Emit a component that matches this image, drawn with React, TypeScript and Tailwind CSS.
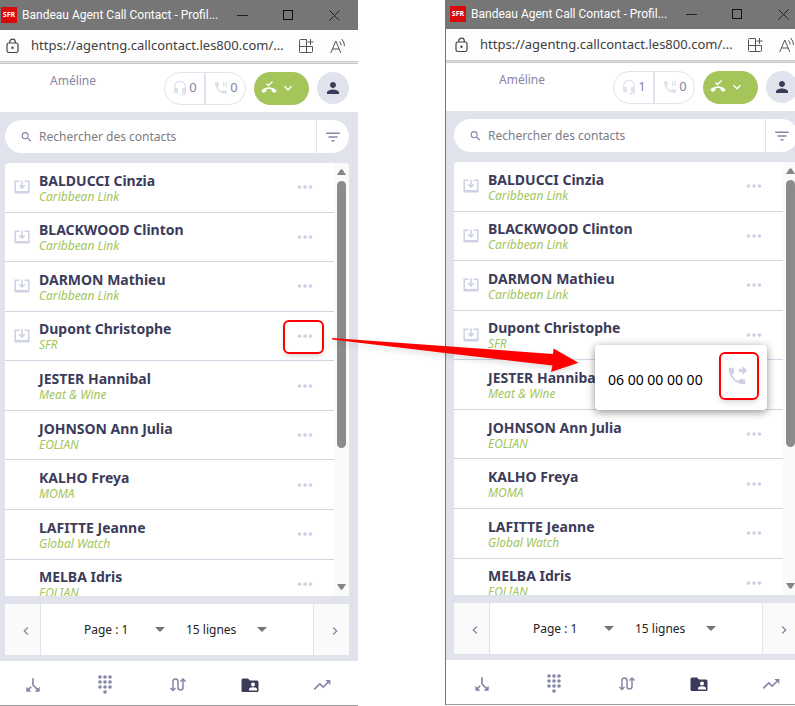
import type { ReactNode } from 'react'
import {
  MdCallSplit,
  MdFilterList,
  MdHeadsetMic,
  MdKeyboardArrowDown,
  MdKeyboardArrowLeft,
  MdKeyboardArrowRight,
  MdMoreHoriz,
  MdPerson,
  MdPhoneForwarded,
  MdPhonePaused,
  MdSearch,
  MdTrendingUp,
} from 'react-icons/md'

const contacts = [
  { name: 'BALDUCCI Cinzia', company: 'Caribbean Link', shared: true },
  { name: 'BLACKWOOD Clinton', company: 'Caribbean Link', shared: true },
  { name: 'DARMON Mathieu', company: 'Caribbean Link', shared: true },
  { name: 'Dupont Christophe', company: 'SFR', shared: true },
  { name: 'JESTER Hannibal', company: 'Meat & Wine', shared: false },
  { name: 'JOHNSON Ann Julia', company: 'EOLIAN', shared: false },
  { name: 'KALHO Freya', company: 'MOMA', shared: false },
  { name: 'LAFITTE Jeanne', company: 'Global Watch', shared: false },
  { name: 'MELBA Idris', company: 'EOLIAN', shared: false },
]

function TitleBar() {
  return (
    <div className="flex h-[30px] items-center bg-[#767676] pl-1 pr-px">
      <span className="flex size-4 shrink-0 items-center justify-center bg-[#d80a0a] text-[7px] font-bold text-white">
        SFR
      </span>
      <h1 className="ml-[5px] flex-1 whitespace-nowrap font-['Roboto',sans-serif] text-[12px] text-white">
        Bandeau Agent Call Contact - Profil...
      </h1>
      <button aria-label="Réduire" className="flex w-[46px] shrink-0 justify-center">
        <svg className="size-[11px]" viewBox="0 0 11 11" stroke="#222">
          <path d="M0 5.5h11" />
        </svg>
      </button>
      <button aria-label="Agrandir" className="flex w-[46px] shrink-0 justify-center">
        <svg className="size-[11px]" viewBox="0 0 11 11" fill="none" stroke="#111">
          <rect x=".5" y=".5" width="9" height="9" />
        </svg>
      </button>
      <button aria-label="Fermer" className="flex w-[46px] shrink-0 justify-center">
        <svg className="size-[11px]" viewBox="0 0 11 11" stroke="#222">
          <path d="M.5.5l10 10M10.5.5l-10 10" />
        </svg>
      </button>
    </div>
  )
}

function AddressBar() {
  return (
    <div className="flex h-8 items-center border-b border-[#c8c8c8] bg-[#fdfdfd] pl-[9px] pr-3">
      <svg className="h-4 w-[13px] shrink-0" viewBox="0 0 13 16" fill="none" stroke="#444" strokeWidth="1.2">
        <rect x="1" y="5" width="11" height="9.5" rx="1.8" />
        <path d="M3.7 5V4a2.8 2.8 0 0 1 5.6 0v1" />
        <circle cx="6.5" cy="9.8" r=".6" fill="#444" />
      </svg>
      <span className="ml-3 flex-1 whitespace-nowrap text-[13px] text-[#404040]">
        https://agentng.callcontact.les800.com/...
      </span>
      <button aria-label="Applications">
        <svg className="size-4" viewBox="0 0 16 16" fill="none" stroke="#555">
          <path d="M8.500 1.500h-6q-1 0-1 1v11q0 1 1 1h11q1 0 1-1v-5h-13M8.500 1.500v13M12.500 1v6M9.500 4h6" />
        </svg>
      </button>
      <button aria-label="Lecture à voix haute" className="ml-4">
        <svg className="size-4" viewBox="0 0 16 16" fill="none" stroke="#555">
          <path d="M.8 15 5.800 3l5 12M2.500 11h6.600M9.500 3.500q1.500 1.500 1.500 4M11.500 1q3 2.500 3 7" />
        </svg>
      </button>
    </div>
  )
}

function Header({ queue }: { queue: number }) {
  return (
    <header className="mt-px flex h-[49px] items-center gap-2 border-t border-[#c8c8c8] bg-white pr-[9px] text-[#8585a5]">
      <span className="flex-1 self-start pl-[53px] pt-2 text-[12px]">Améline</span>
      <div className="flex h-[33px] w-[82px] divide-x-2 divide-[#e0e2ec] rounded-full border border-[#e0e2ec] text-[13px]">
        <span className="flex flex-1 items-center justify-center gap-px">
          <MdHeadsetMic className="size-4 text-[#dfe1ec]" />
          {queue}
        </span>
        <span className="flex flex-1 items-center justify-center gap-px">
          <MdPhonePaused className="size-4 text-[#dfe1ec]" />0
        </span>
      </div>
      <button
        aria-label="Statut"
        className="flex h-[33px] w-[55px] items-center justify-center gap-[3px] rounded-full bg-[#a3c55a] pr-[6px] text-white"
      >
        <svg className="size-4" viewBox="0 0 16 16" fill="currentColor">
          <path d="M8 7.200C5 7.200 2.400 8.500.700 10.300c-.3.300-.3.600 0 .9l1.500 1.500c.3.300.6.300.9 0 .6-.500 1.200-.900 1.900-1.200.3-.1.400-.3.400-.6V9.400c1.700-.5 3.500-.5 5.200 0v1.500c0 .3.200.5.400.6.700.3 1.300.700 1.900 1.200.3.300.6.300.9 0l1.500-1.500c.3-.3.300-.6 0-.9C13.600 8.500 11 7.200 8 7.200z" />
          <path d="M5.500 3.500l2 2 4-4" fill="none" stroke="currentColor" strokeWidth="1.300" />
        </svg>
        <MdKeyboardArrowDown className="size-4" />
      </button>
      <button
        aria-label="Profil"
        className="flex size-8 items-center justify-center rounded-full bg-[#e0e2ec] text-[#3c3c5a]"
      >
        <MdPerson className="size-[18px]" />
      </button>
    </header>
  )
}

function SearchBar() {
  return (
    <form className="flex h-[33px] overflow-hidden rounded-full bg-white text-[#8585a5]">
      <label className="flex flex-1 items-center pl-[15px]">
        <MdSearch className="size-[14px]" />
        <input
          type="text"
          aria-label="Rechercher des contacts"
          placeholder="Rechercher des contacts"
          className="ml-[6px] w-full text-[12px] outline-none placeholder:text-[#7c7c84]"
        />
      </label>
      <button
        type="button"
        aria-label="Filtrer"
        className="flex w-[33px] items-center justify-center border-l border-[#e0e2ec]"
      >
        <MdFilterList className="size-[18px]" />
      </button>
    </form>
  )
}

function TrayIcon() {
  return (
    <svg className="h-[14px] w-4" viewBox="0 0 16 14" fill="none" stroke="currentColor">
      <path d="M5.500 1.200H1.200v11h13.600v-11h-4.300" strokeWidth="1.600" />
      <path d="M1 12.200h14" strokeWidth="2.600" />
      <path d="M8 .5v7M5.200 5.200 8 8l2.800-2.800" strokeWidth="1.600" />
    </svg>
  )
}

function ContactList() {
  return (
    <div className="mt-[10px] flex h-[433px] overflow-hidden rounded-t bg-white">
      <ul className="flex h-[446px] flex-1 flex-col">
        {contacts.map((contact) => (
          <li key={contact.name} className="flex flex-1 items-center border-b border-[#d3d5e3]">
            <span className="flex w-[34px] justify-center text-[#cfd2e4]">
              {contact.shared && <TrayIcon />}
            </span>
            <div className="flex-1 pt-px">
              <p className="text-[14px] font-bold leading-[18px] text-[#3c3c5a]">{contact.name}</p>
              <p className="text-[12px] italic leading-[14px] text-[#a3c55a]">{contact.company}</p>
            </div>
            <button aria-label="Actions" className="mr-[18px] text-[#cfd2e4]">
              <MdMoreHoriz className="size-[22px]" />
            </button>
          </li>
        ))}
      </ul>
      <div className="flex w-[15px] flex-col items-center bg-[#fafafa] pb-[6px] pt-[6px]">
        <svg className="h-[6px] w-[9px] shrink-0" viewBox="0 0 9 6" fill="#858585">
          <path d="M0 6h9L5.500.500h-2z" />
        </svg>
        <span className="mt-[6px] h-[267px] w-[9px] rounded-full bg-[#8b8b8b]" />
        <svg className="mt-auto h-[6px] w-[9px] shrink-0" viewBox="0 0 9 6" fill="#858585">
          <path d="M0 0h9L5.500 5.500h-2z" />
        </svg>
      </div>
    </div>
  )
}

function Dropdown({ label, value }: { label: string; value: string }) {
  return (
    <label className="relative flex w-[81px] items-center">
      <select aria-label={label} className="w-full appearance-none text-[12px] text-[#222] outline-none">
        <option>{value}</option>
      </select>
      <svg className="pointer-events-none absolute right-0 h-[5px] w-[10px]" viewBox="0 0 10 5" fill="#757575">
        <path d="M0 0h10L5 5z" />
      </svg>
    </label>
  )
}

function Pagination() {
  return (
    <div className="mt-2 flex h-[51px] bg-white text-[#8585a5]">
      <button
        aria-label="Page précédente"
        className="flex w-9 items-center justify-center border-r border-[#e0e2ec] bg-[#fafafa] pl-[6px] pt-[3px]"
      >
        <MdKeyboardArrowLeft className="size-4" />
      </button>
      <div className="flex flex-1 items-center justify-center gap-[21px] pr-[3px]">
        <Dropdown label="Page" value="Page : 1" />
        <Dropdown label="Lignes par page" value="15 lignes" />
      </div>
      <button
        aria-label="Page suivante"
        className="flex w-9 items-center justify-center border-l border-[#e0e2ec] bg-[#fafafa] pl-[6px] pt-[3px]"
      >
        <MdKeyboardArrowRight className="size-4" />
      </button>
    </div>
  )
}

function NavItem({ label, children }: { label: string; children: ReactNode }) {
  return (
    <a href="#" aria-label={label} className="flex flex-1 justify-center">
      {children}
    </a>
  )
}

function BottomNav() {
  return (
    <nav className="flex h-[45px] items-center border-b border-[#9a9a9a] bg-white pt-1 text-[#8585a5]">
      <NavItem label="Transferts">
        <MdCallSplit className="size-5 rotate-180" />
      </NavItem>
      <NavItem label="Clavier">
        <svg className="size-5" viewBox="0 0 20 20" fill="currentColor">
          {[2, 7, 12].map((y) =>
            [5, 10, 15].map((x) => <circle key={`${x}-${y}`} cx={x} cy={y} r="1.8" />),
          )}
          <circle cx="10" cy="17" r="1.8" />
        </svg>
      </NavItem>
      <NavItem label="Appels">
        <svg className="size-5" viewBox="0 0 20 20" fill="none" stroke="currentColor" strokeWidth="1.500">
          <path d="M5 15V6.500Q5 4 7.500 4T10 6.500v6q0 2.500 2.500 2.500T15 12.500V4.500" />
          <path d="M2.500 13 5 15.500 7.500 13M12.500 6.500 15 4l2.500 2.500" />
        </svg>
      </NavItem>
      <NavItem label="Contacts">
        <svg className="size-5" viewBox="0 0 20 20" fill="#3c3c5a">
          <path d="M3 3.500h5l2 2h7A1.500 1.500 0 0 1 18.500 7v8.500A1.500 1.500 0 0 1 17 17H3a1.500 1.500 0 0 1-1.500-1.500V5A1.500 1.500 0 0 1 3 3.500z" />
          <circle cx="13" cy="9.500" r="2" fill="#fff" />
          <path d="M9 15.500v-1q0-2.300 4-2.300t4 2.300v1z" fill="#fff" />
        </svg>
      </NavItem>
      <NavItem label="Statistiques">
        <MdTrendingUp className="size-5" />
      </NavItem>
    </nav>
  )
}

function AgentWindow({ queue, className }: { queue: number; className: string }) {
  return (
    <section className={`w-[362px] shrink-0 border-l border-[#767676] bg-[#e0e2ec] ${className}`}>
      <TitleBar />
      <AddressBar />
      <div className="bg-white">
        <Header queue={queue} />
      </div>
      <div className="pb-[6px] pl-2 pr-[9px] pt-2">
        <SearchBar />
        <ContactList />
        <Pagination />
      </div>
      <BottomNav />
    </section>
  )
}

export default function App() {
  return (
    <main className="relative flex items-start gap-[87px] overflow-hidden bg-white font-['Noto_Sans',sans-serif]">
      <AgentWindow queue={0} className="-ml-1" />
      <AgentWindow queue={1} className="-mt-px" />

      <div className="absolute left-[595px] top-[345px] flex h-[65px] w-[172px] items-center rounded bg-white pl-[13px] shadow-[0_2px_8px_rgba(0,0,0,0.45)]">
        <span className="flex-1 whitespace-nowrap pt-1 text-[14px] text-black">06 00 00 00 00</span>
        <button
          aria-label="Transférer"
          className="mb-1 mr-2 flex h-12 w-10 items-center justify-center rounded-md border-2 border-[#f00] pr-[4px] text-[#cfd2e4] shadow-md"
        >
          <MdPhoneForwarded className="size-[22px]" />
        </button>
      </div>

      <div className="absolute left-[283px] top-[320px] h-[34px] w-[41px] rounded-md border-2 border-[#f00] shadow-md" />
      <svg
        className="absolute left-[330px] top-[330px] h-[60px] w-[260px] drop-shadow-md"
        viewBox="0 0 260 60"
        fill="#f00"
      >
        <path d="M2 8l221 16 .5-5.500 25 14.200-27.500 9.300 1.500-6.500L115 23 2 9.500z" />
      </svg>
    </main>
  )
}
